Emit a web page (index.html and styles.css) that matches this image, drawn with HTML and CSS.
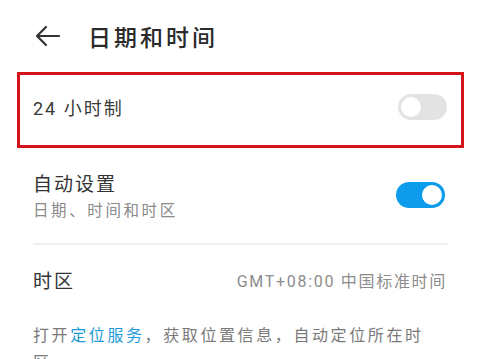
FILE: index.html
```html
<!DOCTYPE html>
<html lang="zh-CN">
<head>
  <meta charset="UTF-8">
  <meta name="viewport" content="width=device-width, initial-scale=1.0">
  <title>日期和时间</title>
  <link rel="stylesheet" href="styles.css">
</head>
<body>
  <div class="header">
    <svg class="back" width="26" height="22" viewBox="0 0 26 22">
      <path d="M24 11H3M11 2L2 11l9 9" fill="none" stroke="#333" stroke-width="2.2" stroke-linecap="round" stroke-linejoin="round"/>
    </svg>
    <h2>日期和时间</h2>
  </div>

  <div class="highlight">
    <div class="row">
      <span class="label">24 小时制</span>
      <span class="switch"></span>
    </div>
  </div>

  <div class="list">
    <div class="row auto">
      <div>
        <div class="label big">自动设置</div>
        <div class="sub">日期、时间和时区</div>
      </div>
      <span class="switch on"></span>
    </div>
    <div class="row zone">
      <span class="label big">时区</span>
      <span class="value">GMT+08:00 中国标准时间</span>
    </div>
    <p class="note">打开<span class="link">定位服务</span>，获取位置信息，自动定位所在时区。</p>
  </div>
</body>
</html>
```

FILE: styles.css
```css
body {
  margin: 0;
  background: #fff;
  font-family: Roboto, "Noto Sans CJK SC", sans-serif;
  color: #333;
  overflow: hidden;
}
.header {
  display: flex;
  align-items: center;
  height: 72px;
  padding-left: 35px;
  gap: 27px;
}
.header h2 {
  margin: 0 0 1px;
  font-size: 23px;
  font-weight: 500;
  letter-spacing: 3px;
  color: #2b2b2b;
}
.back {
  display: block;
}
.highlight {
  margin-left: 17px;
  width: 441px;
  height: 70px;
  border: 3px solid #d4141a;
}
.highlight .row {
  height: 64px;
  padding: 0 14px 6px 13px;
}
.row {
  display: flex;
  justify-content: space-between;
  align-items: center;
}
.label {
  font-size: 18px;
  letter-spacing: 2px;
  color: #3a3a3a;
}
.label.big {
  font-size: 19px;
  letter-spacing: 2px;
  color: #333;
}
.switch {
  position: relative;
  width: 49px;
  height: 26px;
  border-radius: 13px;
  background: #e3e3e3;
}
.switch::after {
  content: "";
  position: absolute;
  left: 1px;
  top: 1px;
  width: 20px;
  height: 20px;
  border-radius: 50%;
  background: #fff;
  border: 2px solid #e3e3e3;
}
.switch.on {
  background: #0d9ceb;
}
.switch.on::after {
  left: auto;
  right: 1px;
  border-color: #0d9ceb;
}
.list {
  margin: 0 32px 0 33px;
}
.auto {
  padding: 21px 3px 23px 0;
  border-bottom: 2px solid #f0f0f0;
}
.sub {
  margin-top: 2px;
  font-size: 15.5px;
  letter-spacing: 2.6px;
  color: #8a8a8a;
}
.zone {
  height: 69px;
  padding-right: 1px;
}
.value {
  font-size: 16px;
  letter-spacing: 1.7px;
  color: #8c8c8c;
}
.note {
  margin: 8px 0 0;
  width: 410px;
  font-size: 16px;
  line-height: 27px;
  letter-spacing: 2.6px;
  color: #7a7a7a;
}
.link {
  color: #1e9bd6;
}
```
